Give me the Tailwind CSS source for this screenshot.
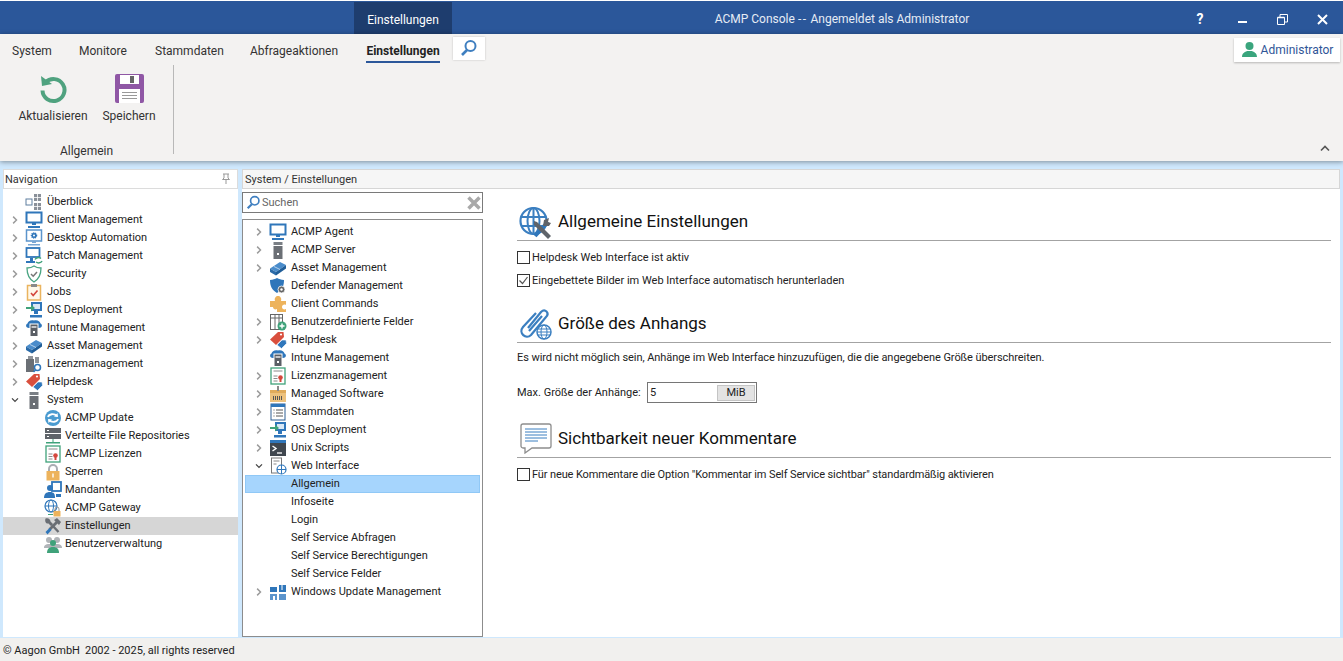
<!DOCTYPE html>
<html lang="de">
<head>
<meta charset="UTF-8">
<title>ACMP Console</title>
<script src="https://cdn.jsdelivr.net/npm/@tailwindcss/browser@4"></script>
</head>
<body class="h-[661px] w-[1343px] overflow-hidden bg-white font-['Roboto',sans-serif] text-[11px] text-[#222]">

<!-- icon sprites -->
<svg class="hidden">
  <symbol id="ch-r" viewBox="0 0 8 12"><path d="M1.500 1.500 6 6l-4.500 4.500" fill="none" stroke="#9a9a9a" stroke-width="1.900"/></symbol>
  <symbol id="ch-d" viewBox="0 0 12 8"><path d="M1.500 1.500 6 6l4.500-4.500" fill="none" stroke="#444" stroke-width="1.900"/></symbol>
  <symbol id="i-overview" viewBox="0 0 18 18"><rect x="1" y="6" width="6" height="6" fill="#fff" stroke="#5f7f9f"/><rect x="9" y="1" width="7" height="7" fill="#8a9099"/><rect x="9" y="10" width="7" height="7" fill="#8a9099"/><path d="M12.500 1v7M9 4.500h7M12.500 10v7M9 13.500h7" stroke="#fff" stroke-width=".8"/></symbol>
  <symbol id="i-monitor" viewBox="0 0 18 18"><rect x="1.500" y="1.500" width="15" height="10" fill="#fff" stroke="#2f76ba" stroke-width="2"/><path d="M7 12h4v2H7z" fill="#2f76ba"/><path d="M3 15h12v2H3z" fill="#2f76ba"/></symbol>
  <symbol id="i-desktop" viewBox="0 0 18 18"><rect x="1.500" y="1" width="15" height="11" fill="#fff" stroke="#5b94cc" stroke-width="1.500"/><circle cx="9" cy="6.500" r="2.500" fill="#2f76ba" stroke="#2f76ba" stroke-dasharray="1 .8" stroke-width="1.500"/><circle cx="9" cy="6.500" r="1" fill="#fff"/><path d="M7 12h4v2H7zM3 15h12v1.500H3z" fill="#7aa7d4"/></symbol>
  <symbol id="i-patch" viewBox="0 0 18 18"><rect x="1.500" y="1" width="13" height="9" fill="#fff" stroke="#2f76ba" stroke-width="1.800"/><path d="M1 14h9v2H1zM5 11h3v3H5z" fill="#2f76ba"/><path d="M10 12.500c1-2 4-2.500 6-1M17 14c-1 2-4 2.500-6 1" fill="none" stroke="#3fa27a" stroke-width="1.500"/></symbol>
  <symbol id="i-shield" viewBox="0 0 18 18"><path d="M9 1c2 1.500 4 2 7 2 0 7-2 11-7 14C4 14 2 10 2 3c3 0 5-.5 7-2z" fill="#fff" stroke="#4aa583" stroke-width="1.300"/><path d="m6 9 2.200 2.200L12 7" fill="none" stroke="#777" stroke-width="1.500"/></symbol>
  <symbol id="i-jobs" viewBox="0 0 18 18"><rect x="2.500" y="2.500" width="13" height="14.500" fill="#fff8ea" stroke="#eab45f" stroke-width="1.500"/><rect x="6" y="1" width="6" height="3" fill="#8a8a8a"/><path d="m6 10 2.200 2.500L12.500 7.500" fill="none" stroke="#d4473c" stroke-width="1.600"/></symbol>
  <symbol id="i-os" viewBox="0 0 18 18"><rect x="6" y="1" width="11" height="9" fill="#2f76ba"/><rect x="8" y="3" width="7" height="5" fill="#d8e8f6"/><path d="M9 10h4v3H9zM5 14h12v2.500H5z" fill="#2f76ba"/><path d="M1 6h5V3.500L10 7l-4 3.500V8H1z" fill="#3fa27a"/></symbol>
  <symbol id="i-intune" viewBox="0 0 18 18"><path d="M4 9C1 9 0 6 2.500 4.500 3 2 6 .5 9 1.500c3-1 6 .5 6.500 3C18 6 17 9 14 9z" fill="#2f76ba"/><rect x="5" y="5" width="8" height="12.500" fill="#5a5f66" stroke="#fff"/><path d="M6.500 8h5" stroke="#fff" stroke-width="1.300"/><rect x="8" y="12" width="2" height="2" fill="#fff"/></symbol>
  <symbol id="i-asset" viewBox="0 0 18 18"><path d="M1 9.500 11 3l6 3-10 7z" fill="#4a8ccb"/><path d="M1 9.500V13l6 3.500V13z" fill="#2a6aa8"/><path d="M7 13v3.500L17 9.500V6z" fill="#1f5d98"/><path d="m5 7.500 6 3" stroke="#cfe2f4" stroke-width=".8"/></symbol>
  <symbol id="i-lizenz" viewBox="0 0 18 18"><path d="M1 4h8v13H1z" fill="#6b6f75"/><path d="M3 1h5v3H3zM10 2h4v6h-4z" fill="#8f949a"/><circle cx="12.500" cy="12.500" r="3" fill="#fff" stroke="#2f76ba" stroke-width="1.500"/><path d="m10.500 15-2 2" stroke="#2f76ba" stroke-width="1.600"/></symbol>
  <symbol id="i-tag" viewBox="0 0 18 18"><path d="M1 8.500 9 1h5.500l.5 5-8 8z" fill="#d94f3d"/><circle cx="12" cy="3.500" r="1.100" fill="#fff"/><path d="m8 14 5-5 4 0 .5 3.500-5 5z" fill="#2f76ba" stroke="#fff" stroke-width=".6"/></symbol>
  <symbol id="i-server" viewBox="0 0 18 18"><path d="M4.500 1h9v3h-9z" fill="#7a7f85"/><path d="M4.500 5h9v13h-9z" fill="#6b6f75"/><rect x="8" y="12" width="2" height="2" fill="#fff"/></symbol>
  <symbol id="i-update" viewBox="0 0 18 18"><circle cx="9" cy="9" r="8" fill="#4a9bd0"/><path d="M4 8c1-3 6-4 9-1M14 10c-1 3-6 4-9 1" fill="none" stroke="#fff" stroke-width="1.800"/><path d="m13.500 4 .5 4-4-.500zM4.500 14 4 10l4 .5z" fill="#fff"/></symbol>
  <symbol id="i-repo" viewBox="0 0 18 18"><path d="M1 1h16v5H1zM1 7h16v5H1z" fill="#5f646a"/><path d="M3 3h2v1H3zM3 9h2v1H3z" fill="#fff"/><path d="M8.500 12h1v3h-1zM2 15h14v1.500H2z" fill="#3fa27a"/></symbol>
  <symbol id="i-cert" viewBox="0 0 18 18"><rect x="2" y="1" width="14" height="16" fill="#fff" stroke="#3fa27a" stroke-width="1.300"/><path d="M4.500 4h9M4.500 9h4M4.500 11.500h4M4.500 14h4" stroke="#8a8a8a"/><circle cx="11.500" cy="10.500" r="2.300" fill="#d4473c"/><path d="M10.500 12h2v3h-2z" fill="#d4473c"/></symbol>
  <symbol id="i-lock" viewBox="0 0 18 18"><path d="M5 9V6a4 4 0 0 1 8 0v3" fill="none" stroke="#a9adb2" stroke-width="2"/><rect x="2.500" y="8" width="13" height="9.500" fill="#edb35c"/><rect x="8.300" y="10.500" width="1.400" height="4" fill="#fff"/></symbol>
  <symbol id="i-mand" viewBox="0 0 18 18"><rect x="8" y="1" width="9" height="9" fill="#fff" stroke="#2f76ba" stroke-width="1.800"/><circle cx="6" cy="7" r="3" fill="#2f76ba"/><path d="M0 17c0-4 2-6 6-6s5 2 5 6z" fill="#2f76ba"/><path d="M12 13h5v3h-5z" fill="#2f76ba"/></symbol>
  <symbol id="i-gateway" viewBox="0 0 18 18"><circle cx="7" cy="7" r="6" fill="#fff" stroke="#2f76ba" stroke-width="1.200"/><ellipse cx="7" cy="7" rx="2.500" ry="6" fill="none" stroke="#2f76ba"/><path d="M1 7h12" stroke="#2f76ba"/><path d="M11 12v-2a2 2 0 0 1 4 0v2" fill="none" stroke="#999"/><rect x="9.500" y="12" width="7" height="5.500" fill="#edb35c"/><path d="M4 15.500h5" stroke="#3fa27a"/></symbol>
  <symbol id="i-tools" viewBox="0 0 18 18"><path d="M8 8 14.500 15" stroke="#6a6e74" stroke-width="2.400"/><path d="M1.500 1.500C4 .5 6.500 2 6.500 4.500l2.500 2.500-2 2-2.500-2.500C2 7 .5 4.500 1.500 1.500z" fill="#6a6e74"/><path d="M10 3l3-2 4 4-2 3-1.500-1.500-7 7-2-2 7-7z" fill="#6a6e74"/><path d="m1.500 15 4-4 2 2-4 4.500z" fill="#2f76ba"/></symbol>
  <symbol id="i-users" viewBox="0 0 18 18"><circle cx="5" cy="5" r="3" fill="#b0b4b8"/><circle cx="13" cy="5" r="3" fill="#b0b4b8"/><path d="M0 13c0-3 2-4 5-4s5 1 5 4zM8 13c0-3 2-4 5-4s5 1 5 4z" fill="#b0b4b8"/><circle cx="9" cy="8" r="3" fill="#3fa27a"/><path d="M3 18c0-4 2-6 6-6s6 2 6 6z" fill="#3fa27a"/></symbol>
  <symbol id="i-def" viewBox="0 0 18 18"><path d="M8 1c2 1.200 4 1.800 7 2 0 5-1 9-7 13C3 13 1 9 1 3c3-.2 5-.8 7-2z" fill="#2f76ba"/><circle cx="12.500" cy="12.500" r="3.500" fill="#666" stroke="#fff" stroke-width=".8"/><circle cx="12.500" cy="12.500" r="1.200" fill="#fff"/></symbol>
  <symbol id="i-puzzle" viewBox="0 0 18 18"><path d="M1 6h5c-1-3 1-5 3-5s4 2 3 5h5v4c-2-1-4 0-4 2s2 3 4 2v3H8v-3c-2 1-4 0-4-2H1z" fill="#edb35c"/></symbol>
  <symbol id="i-fields" viewBox="0 0 18 18"><rect x="1.500" y="1.500" width="12" height="15" fill="#fff" stroke="#666"/><path d="M1.500 5h12M6 1.500v15M10 1.500v15" stroke="#666"/><circle cx="13" cy="13" r="4.500" fill="#3fa27a"/><path d="M13 10.500v5M10.500 13h5" stroke="#fff" stroke-width="1.400"/></symbol>
  <symbol id="i-managed" viewBox="0 0 18 18"><path d="M1 5h16v12H1z" fill="#edc27e"/><path d="M1 5h16v3H1z" fill="#e0ab5b"/><path d="M8 1h2v5H8z" fill="#8a8a8a"/><path d="M4 11h1v4H4zM6 11h1v4H6zM8 11h1v4H8zM10 11h1v4h-1zM12 11h1v4h-1z" fill="#555"/></symbol>
  <symbol id="i-list" viewBox="0 0 18 18"><rect x="2" y="1" width="14" height="16" fill="#fff" stroke="#2f5f93"/><path d="M2 1h14v3H2z" fill="#2f76ba"/><path d="M4.500 7h1M7 7h7M4.500 10h1M7 10h7M4.500 13h1M7 13h7" stroke="#555"/></symbol>
  <symbol id="i-unix" viewBox="0 0 18 18"><rect x="1" y="1" width="16" height="16" fill="#3f464e"/><path d="M1 1h16v3H1z" fill="#2f76ba"/><path d="m3.500 7 3.500 2.500-3.500 2.500" fill="none" stroke="#fff" stroke-width="1.400"/><path d="M8 14h5" stroke="#fff" stroke-width="1.300"/></symbol>
  <symbol id="i-web" viewBox="0 0 18 18"><rect x="2.500" y="1" width="10" height="15" fill="#fff" stroke="#777"/><path d="M4.500 4h6M4.500 7h3" stroke="#888"/><circle cx="12.500" cy="12.500" r="4.500" fill="#fff" stroke="#2f76ba" stroke-width="1.200"/><path d="M8 12.500h9M12.500 8v9" stroke="#2f76ba"/></symbol>
  <symbol id="i-win" viewBox="0 0 18 18"><path d="M1 4h7v5H1z" fill="#2f76ba"/><path d="M10 2h7v7h-7z" fill="#2f76ba"/><path d="M1 11h7v6H1zM10 11h7v6h-7z" fill="#5b94cc"/><path d="M13 2v5" stroke="#fff"/><path d="M4 13h2v4H4z" fill="#fff"/></symbol>
  <symbol id="i-search" viewBox="0 0 18 18"><circle cx="10.500" cy="7" r="5" fill="none" stroke="#3f7fc0" stroke-width="2"/><path d="m7 11-5 5" stroke="#3f7fc0" stroke-width="2.600"/></symbol>
</svg>

<div class="h-px bg-white"></div>

<!-- title bar -->
<div class="relative flex h-[33px] items-end bg-[#2b579a] text-white">
  <div class="ml-[354px] flex h-[32px] w-[98px] items-center justify-center bg-[#1e3d6e] pt-[4px] text-[12px]">Einstellungen</div>
  <div class="absolute left-0 right-0 top-0 flex h-full items-center justify-center pt-[3px] text-[12px] text-[#e6ecf5]"><span class="ml-[341px]">ACMP Console <span class="tracking-[1.500px]">--</span> Angemeldet als Administrator</span></div>
  <div class="absolute right-0 top-0 flex h-full w-[160px] items-center pt-[3px] text-white">
    <span class="ml-[8px] w-[18px] text-center text-[14px] font-bold">?</span>
    <svg class="ml-[29px]" width="10" height="10" viewBox="0 0 10 10"><path d="M0 8h9" stroke="#fff" stroke-width="2"/></svg>
    <svg class="ml-[29px]" width="11" height="11" viewBox="0 0 11 11"><path d="M.5 3.500h7v7h-7zM3 3V.5h7.500V8H8" fill="none" stroke="#fff"/><path d="M.5 3.500h7" stroke="#fff" stroke-width="1.500"/></svg>
    <svg class="ml-[29px]" width="11" height="11" viewBox="0 0 11 11"><path d="m1 1 9 9M10 1l-9 9" stroke="#fff" stroke-width="2"/></svg>
  </div>
</div>

<!-- ribbon -->
<div class="relative z-10 h-[127px] bg-[#f3f2f1] shadow-[0_1px_5px_rgba(0,0,0,0.4)]">
  <div class="flex h-[31px] items-center justify-between pr-[3px]">
    <div class="flex h-full items-center pl-[12px] text-[12px] text-[#333]">
      <span class="w-[67px] pt-[3px]">System</span>
      <span class="w-[76px] pt-[3px]">Monitore</span>
      <span class="w-[95px] pt-[3px]">Stammdaten</span>
      <span class="w-[116px] pt-[3px]">Abfrageaktionen</span>
      <span class="relative flex h-full w-[74px] items-center justify-center whitespace-nowrap pt-[3px] font-bold text-[#222]">Einstellungen<span class="absolute bottom-[2px] left-0 right-0 h-[2.500px] bg-[#2b579a]"></span></span>
      <span class="mb-[3px] ml-[13px] flex h-[23px] w-[32px] items-center justify-center bg-white shadow-[0_0_2px_rgba(0,0,0,0.2)]"><svg width="18" height="18"><use href="#i-search"/></svg></span>
    </div>
    <div class="flex h-[24px] w-[106px] items-center justify-center gap-[3px] bg-white text-[12px] text-[#2f5597] shadow-[0_1px_2px_rgba(0,0,0,0.25)]">
      <svg width="17" height="17" viewBox="0 0 17 17"><circle cx="8.500" cy="5" r="4" fill="#3aa57d"/><path d="M1 16c0-4 3-5 5-6h5c2 1 5 2 5 6z" fill="#3aa57d"/></svg><span class="pt-[1px]">Administrator</span>
    </div>
  </div>
  <div class="flex h-[89px]">
    <div class="flex w-[174px] flex-col border-r border-[#b8b8b8] text-[12px] text-[#333]">
      <div class="flex h-[68px] pl-[10px] pt-[9px]">
        <div class="flex w-[86px] flex-col items-center">
          <svg width="30" height="30" viewBox="0 0 30 30"><path d="M7.500 8.500a11 11 0 1 1-3 8" fill="none" stroke="#4fa27f" stroke-width="4"/><path d="M3 2l1 10 10-2z" fill="#4fa27f"/></svg>
          <span class="mt-[3px]">Aktualisieren</span>
        </div>
        <div class="flex w-[66px] flex-col items-center">
          <svg width="29" height="29" viewBox="0 0 29 29"><path d="M2 0h25a2 2 0 0 1 2 2v25a2 2 0 0 1-2 2H2a2 2 0 0 1-2-2V2a2 2 0 0 1 2-2z" fill="#8f57a5"/><rect x="5" y="1" width="19" height="9" fill="#fff"/><rect x="15" y="2" width="4" height="7" fill="#666"/><rect x="4" y="15" width="21" height="14" fill="#fff"/><path d="M7 18.500h15M7 21.500h15M7 24.500h15" stroke="#999"/></svg>
          <span class="mt-[4px]">Speichern</span>
        </div>
      </div>
      <div class="mt-[17px] text-center">Allgemein</div>
    </div>
    <div class="flex-1"></div>
    <svg class="mr-[12px] mt-[79px]" width="12" height="9" viewBox="0 0 12 9"><path d="M2 6.500 6 2.500l4 4" fill="none" stroke="#555" stroke-width="1.600"/></svg>
  </div>
</div>

<!-- main area -->
<div class="flex h-[477px] gap-[4px] bg-[#cfe8fd] pb-px pl-[3px] pr-[3px] pt-[8px]">
  <!-- navigation -->
  <div class="flex w-[235px] flex-col bg-white">
    <div class="flex h-[20px] items-center justify-between border border-[#dcdcdc] pl-[1px] pr-[5px] text-[#333]"><span class="pt-[2px]">Navigation</span>
      <svg width="12" height="12" viewBox="0 0 12 12"><path d="M3 1h6M4 1v4L2.500 6.500h7L8 5V1M6 7v4" fill="none" stroke="#999"/></svg>
    </div>
    <div class="mt-[4px]">
      <div class="flex h-[18px] items-center pl-[22px]"><svg class="mr-[4px] size-[18px]"><use href="#i-overview"/></svg>Überblick</div>
      <div class="flex h-[18px] items-center"><svg class="ml-[9px] mr-[7px] h-[10px] w-[6px]"><use href="#ch-r"/></svg><svg class="mr-[4px] size-[18px]"><use href="#i-monitor"/></svg>Client Management</div>
      <div class="flex h-[18px] items-center"><svg class="ml-[9px] mr-[7px] h-[10px] w-[6px]"><use href="#ch-r"/></svg><svg class="mr-[4px] size-[18px]"><use href="#i-desktop"/></svg>Desktop Automation</div>
      <div class="flex h-[18px] items-center"><svg class="ml-[9px] mr-[7px] h-[10px] w-[6px]"><use href="#ch-r"/></svg><svg class="mr-[4px] size-[18px]"><use href="#i-patch"/></svg>Patch Management</div>
      <div class="flex h-[18px] items-center"><svg class="ml-[9px] mr-[7px] h-[10px] w-[6px]"><use href="#ch-r"/></svg><svg class="mr-[4px] size-[18px]"><use href="#i-shield"/></svg>Security</div>
      <div class="flex h-[18px] items-center"><svg class="ml-[9px] mr-[7px] h-[10px] w-[6px]"><use href="#ch-r"/></svg><svg class="mr-[4px] size-[18px]"><use href="#i-jobs"/></svg>Jobs</div>
      <div class="flex h-[18px] items-center"><svg class="ml-[9px] mr-[7px] h-[10px] w-[6px]"><use href="#ch-r"/></svg><svg class="mr-[4px] size-[18px]"><use href="#i-os"/></svg>OS Deployment</div>
      <div class="flex h-[18px] items-center"><svg class="ml-[9px] mr-[7px] h-[10px] w-[6px]"><use href="#ch-r"/></svg><svg class="mr-[4px] size-[18px]"><use href="#i-intune"/></svg>Intune Management</div>
      <div class="flex h-[18px] items-center"><svg class="ml-[9px] mr-[7px] h-[10px] w-[6px]"><use href="#ch-r"/></svg><svg class="mr-[4px] size-[18px]"><use href="#i-asset"/></svg>Asset Management</div>
      <div class="flex h-[18px] items-center"><svg class="ml-[9px] mr-[7px] h-[10px] w-[6px]"><use href="#ch-r"/></svg><svg class="mr-[4px] size-[18px]"><use href="#i-lizenz"/></svg>Lizenzmanagement</div>
      <div class="flex h-[18px] items-center"><svg class="ml-[9px] mr-[7px] h-[10px] w-[6px]"><use href="#ch-r"/></svg><svg class="mr-[4px] size-[18px]"><use href="#i-tag"/></svg>Helpdesk</div>
      <div class="flex h-[18px] items-center"><svg class="ml-[8px] mr-[6px] h-[6px] w-[8px]"><use href="#ch-d"/></svg><svg class="mr-[4px] size-[18px]"><use href="#i-server"/></svg>System</div>
      <div class="flex h-[18px] items-center pl-[41px]"><svg class="mr-[3px] size-[18px]"><use href="#i-update"/></svg>ACMP Update</div>
      <div class="flex h-[18px] items-center pl-[41px]"><svg class="mr-[3px] size-[18px]"><use href="#i-repo"/></svg>Verteilte File Repositories</div>
      <div class="flex h-[18px] items-center pl-[41px]"><svg class="mr-[3px] size-[18px]"><use href="#i-cert"/></svg>ACMP Lizenzen</div>
      <div class="flex h-[18px] items-center pl-[41px]"><svg class="mr-[3px] size-[18px]"><use href="#i-lock"/></svg>Sperren</div>
      <div class="flex h-[18px] items-center pl-[41px]"><svg class="mr-[3px] size-[18px]"><use href="#i-mand"/></svg>Mandanten</div>
      <div class="flex h-[18px] items-center pl-[41px]"><svg class="mr-[3px] size-[18px]"><use href="#i-gateway"/></svg>ACMP Gateway</div>
      <div class="flex h-[18px] items-center bg-[#d6d6d6] pl-[41px]"><svg class="mr-[3px] size-[18px]"><use href="#i-tools"/></svg>Einstellungen</div>
      <div class="flex h-[18px] items-center pl-[41px]"><svg class="mr-[3px] size-[18px]"><use href="#i-users"/></svg>Benutzerverwaltung</div>
    </div>
  </div>

  <!-- right side -->
  <div class="flex min-w-0 flex-1 flex-col">
    <div class="flex h-[20px] items-center border border-[#d6d6d6] bg-[#f6f6f6] pl-[2px] pt-[2px] text-[#333]">System / Einstellungen</div>
    <div class="flex min-h-0 flex-1 bg-white">
      <!-- tree -->
      <div class="flex w-[241px] flex-col pt-[3px]">
        <div class="relative flex h-[21px] items-center border border-[#7a7a7a] bg-white pl-[3px] text-[#666]">
          <svg class="mr-[1px] size-[15px]"><use href="#i-search"/></svg><span class="pt-[2px]">Suchen</span>
          <svg class="absolute right-[1px] top-[3px]" width="14" height="14" viewBox="0 0 14 14"><path d="m1.500 1.500 11 11M12.500 1.500l-11 11" stroke="#a9a9a9" stroke-width="3.500"/></svg>
        </div>
        <div class="mt-[6px] flex-1 border border-[#8c8c8c] pl-[2px] pr-[2px] pt-[3px]">
          <div class="flex h-[18px] items-center"><svg class="ml-[11px] mr-[7px] h-[10px] w-[6px]"><use href="#ch-r"/></svg><svg class="mr-[4px] size-[18px]"><use href="#i-monitor"/></svg>ACMP Agent</div>
          <div class="flex h-[18px] items-center"><svg class="ml-[11px] mr-[7px] h-[10px] w-[6px]"><use href="#ch-r"/></svg><svg class="mr-[4px] size-[18px]"><use href="#i-server"/></svg>ACMP Server</div>
          <div class="flex h-[18px] items-center"><svg class="ml-[11px] mr-[7px] h-[10px] w-[6px]"><use href="#ch-r"/></svg><svg class="mr-[4px] size-[18px]"><use href="#i-asset"/></svg>Asset Management</div>
          <div class="flex h-[18px] items-center pl-[24px]"><svg class="mr-[4px] size-[18px]"><use href="#i-def"/></svg>Defender Management</div>
          <div class="flex h-[18px] items-center pl-[24px]"><svg class="mr-[4px] size-[18px]"><use href="#i-puzzle"/></svg>Client Commands</div>
          <div class="flex h-[18px] items-center"><svg class="ml-[11px] mr-[7px] h-[10px] w-[6px]"><use href="#ch-r"/></svg><svg class="mr-[4px] size-[18px]"><use href="#i-fields"/></svg>Benutzerdefinierte Felder</div>
          <div class="flex h-[18px] items-center"><svg class="ml-[11px] mr-[7px] h-[10px] w-[6px]"><use href="#ch-r"/></svg><svg class="mr-[4px] size-[18px]"><use href="#i-tag"/></svg>Helpdesk</div>
          <div class="flex h-[18px] items-center pl-[24px]"><svg class="mr-[4px] size-[18px]"><use href="#i-intune"/></svg>Intune Management</div>
          <div class="flex h-[18px] items-center"><svg class="ml-[11px] mr-[7px] h-[10px] w-[6px]"><use href="#ch-r"/></svg><svg class="mr-[4px] size-[18px]"><use href="#i-cert"/></svg>Lizenzmanagement</div>
          <div class="flex h-[18px] items-center"><svg class="ml-[11px] mr-[7px] h-[10px] w-[6px]"><use href="#ch-r"/></svg><svg class="mr-[4px] size-[18px]"><use href="#i-managed"/></svg>Managed Software</div>
          <div class="flex h-[18px] items-center"><svg class="ml-[11px] mr-[7px] h-[10px] w-[6px]"><use href="#ch-r"/></svg><svg class="mr-[4px] size-[18px]"><use href="#i-list"/></svg>Stammdaten</div>
          <div class="flex h-[18px] items-center"><svg class="ml-[11px] mr-[7px] h-[10px] w-[6px]"><use href="#ch-r"/></svg><svg class="mr-[4px] size-[18px]"><use href="#i-os"/></svg>OS Deployment</div>
          <div class="flex h-[18px] items-center"><svg class="ml-[11px] mr-[7px] h-[10px] w-[6px]"><use href="#ch-r"/></svg><svg class="mr-[4px] size-[18px]"><use href="#i-unix"/></svg>Unix Scripts</div>
          <div class="flex h-[18px] items-center"><svg class="ml-[10px] mr-[6px] h-[6px] w-[8px]"><use href="#ch-d"/></svg><svg class="mr-[4px] size-[18px]"><use href="#i-web"/></svg>Web Interface</div>
          <div class="flex h-[18px] items-center border border-[#90c8f6] bg-[#a6d5fd] pl-[45px]">Allgemein</div>
          <div class="flex h-[18px] items-center pl-[46px]">Infoseite</div>
          <div class="flex h-[18px] items-center pl-[46px]">Login</div>
          <div class="flex h-[18px] items-center pl-[46px]">Self Service Abfragen</div>
          <div class="flex h-[18px] items-center pl-[46px]">Self Service Berechtigungen</div>
          <div class="flex h-[18px] items-center pl-[46px]">Self Service Felder</div>
          <div class="flex h-[18px] items-center"><svg class="ml-[11px] mr-[7px] h-[10px] w-[6px]"><use href="#ch-r"/></svg><svg class="mr-[4px] size-[18px]"><use href="#i-win"/></svg>Windows Update Management</div>
        </div>
      </div>

      <!-- settings -->
      <div class="flex-1 pl-[34px] pr-[9px] pt-[15px] text-[#222]">
        <div class="flex h-[37px] items-center border-b border-[#a3a3a3] text-[17px] text-[#111]">
          <svg class="ml-[2px] mr-[6px] shrink-0" width="33" height="33" viewBox="0 0 33 33"><circle cx="14.500" cy="15" r="13" fill="#fff" stroke="#3b7fc0" stroke-width="2.200"/><ellipse cx="14.500" cy="15" rx="6" ry="13" fill="none" stroke="#3b7fc0" stroke-width="2"/><path d="M2 11h25M2 20h25M14.500 2v26" stroke="#3b7fc0" stroke-width="2"/><path d="m16 30 13-14" stroke="#2f76ba" stroke-width="4"/><path d="m15 15 3 1 14 14-3 3-14-14z" fill="#5f646a"/><path d="m24 20 1-6 5-2-1 4 3 1-2 3z" fill="#5f646a"/></svg>
          Allgemeine Einstellungen
        </div>
        <label class="mt-[9px] flex h-[14px] items-center gap-[2px]"><span class="size-[13px] border border-[#333] bg-white"></span><span class="pt-[2px]">Helpdesk Web Interface ist aktiv</span></label>
        <label class="mt-[9px] flex h-[14px] items-center gap-[2px]"><span class="flex size-[13px] items-center justify-center border border-[#333] bg-white"><svg width="11" height="11" viewBox="0 0 11 11"><path d="m1.500 5.500 3 3 5-6.500" fill="none" stroke="#555" stroke-width="1.200"/></svg></span><span class="pt-[2px]">Eingebettete Bilder im Web Interface automatisch herunterladen</span></label>
        <div class="mt-[20px] flex h-[36px] items-center border-b border-[#a3a3a3] pb-[2px] text-[17px] text-[#111]">
          <svg class="ml-[2px] mr-[6px] shrink-0" width="33" height="33" viewBox="0 0 33 33"><path d="M9 21 22 5c4-4 9 1 5 5L12 28c-5 5-13-2-8-8L17 6M10 24 23 9" fill="none" stroke="#3b7fc0" stroke-width="2.200"/><circle cx="25" cy="25" r="7" fill="#fff" stroke="#3b7fc0" stroke-width="1.500"/><ellipse cx="25" cy="25" rx="3" ry="7" fill="none" stroke="#3b7fc0"/><path d="M18 25h14M19 22h12M19 28h12" stroke="#3b7fc0"/></svg>
          Größe des Anhangs
        </div>
        <p class="mt-[7px] h-[16px] whitespace-nowrap leading-[16px] tracking-[-0.07px]">Es wird nicht möglich sein, Anhänge im Web Interface hinzuzufügen, die die angegebene Größe überschreiten.</p>
        <div class="mt-[16px] flex items-center whitespace-nowrap">
          <span class="w-[130px] pt-[2px]">Max. Größe der Anhänge:</span>
          <div class="flex h-[21px] w-[110px] items-center justify-between border border-[#767676] pl-[2px] pr-[1px]"><span class="pt-[1px]">5</span><span class="flex h-[16px] w-[38px] items-center justify-center border border-[#c4c4c4] bg-[#e3e3e3] pt-[1px]">MiB</span></div>
        </div>
        <div class="mt-[19px] flex h-[36px] items-center border-b border-[#a3a3a3] pb-[2px] text-[17px] text-[#111]">
          <svg class="ml-[3px] mr-[6px] shrink-0" width="32" height="31" viewBox="0 0 32 31"><path d="M3 1h26a2 2 0 0 1 2 2v20a2 2 0 0 1-2 2H12l-7 5v-5H3a2 2 0 0 1-2-2V3a2 2 0 0 1 2-2z" fill="#fff" stroke="#8d8d8d" stroke-width="1.300"/><path d="M5 6h22M5 9h22M5 12h22M5 15h22M5 18h13" stroke="#3b7fc0"/></svg>
          Sichtbarkeit neuer Kommentare
        </div>
        <label class="mt-[9px] flex h-[14px] items-center gap-[2px] tracking-[-0.12px]"><span class="size-[13px] border border-[#333] bg-white"></span><span class="pt-[2px]">Für neue Kommentare die Option "Kommentar im Self Service sichtbar" standardmäßig aktivieren</span></label>
      </div>
    </div>
  </div>
</div>

<!-- status bar -->
<div class="flex h-[23px] items-center gap-[5px] bg-[#f1f0ee] pl-[3px] pt-[3px] text-[11px] text-[#222]"><span>© Aagon GmbH</span><span>2002 - 2025, all rights reserved</span></div>

</body>
</html>
